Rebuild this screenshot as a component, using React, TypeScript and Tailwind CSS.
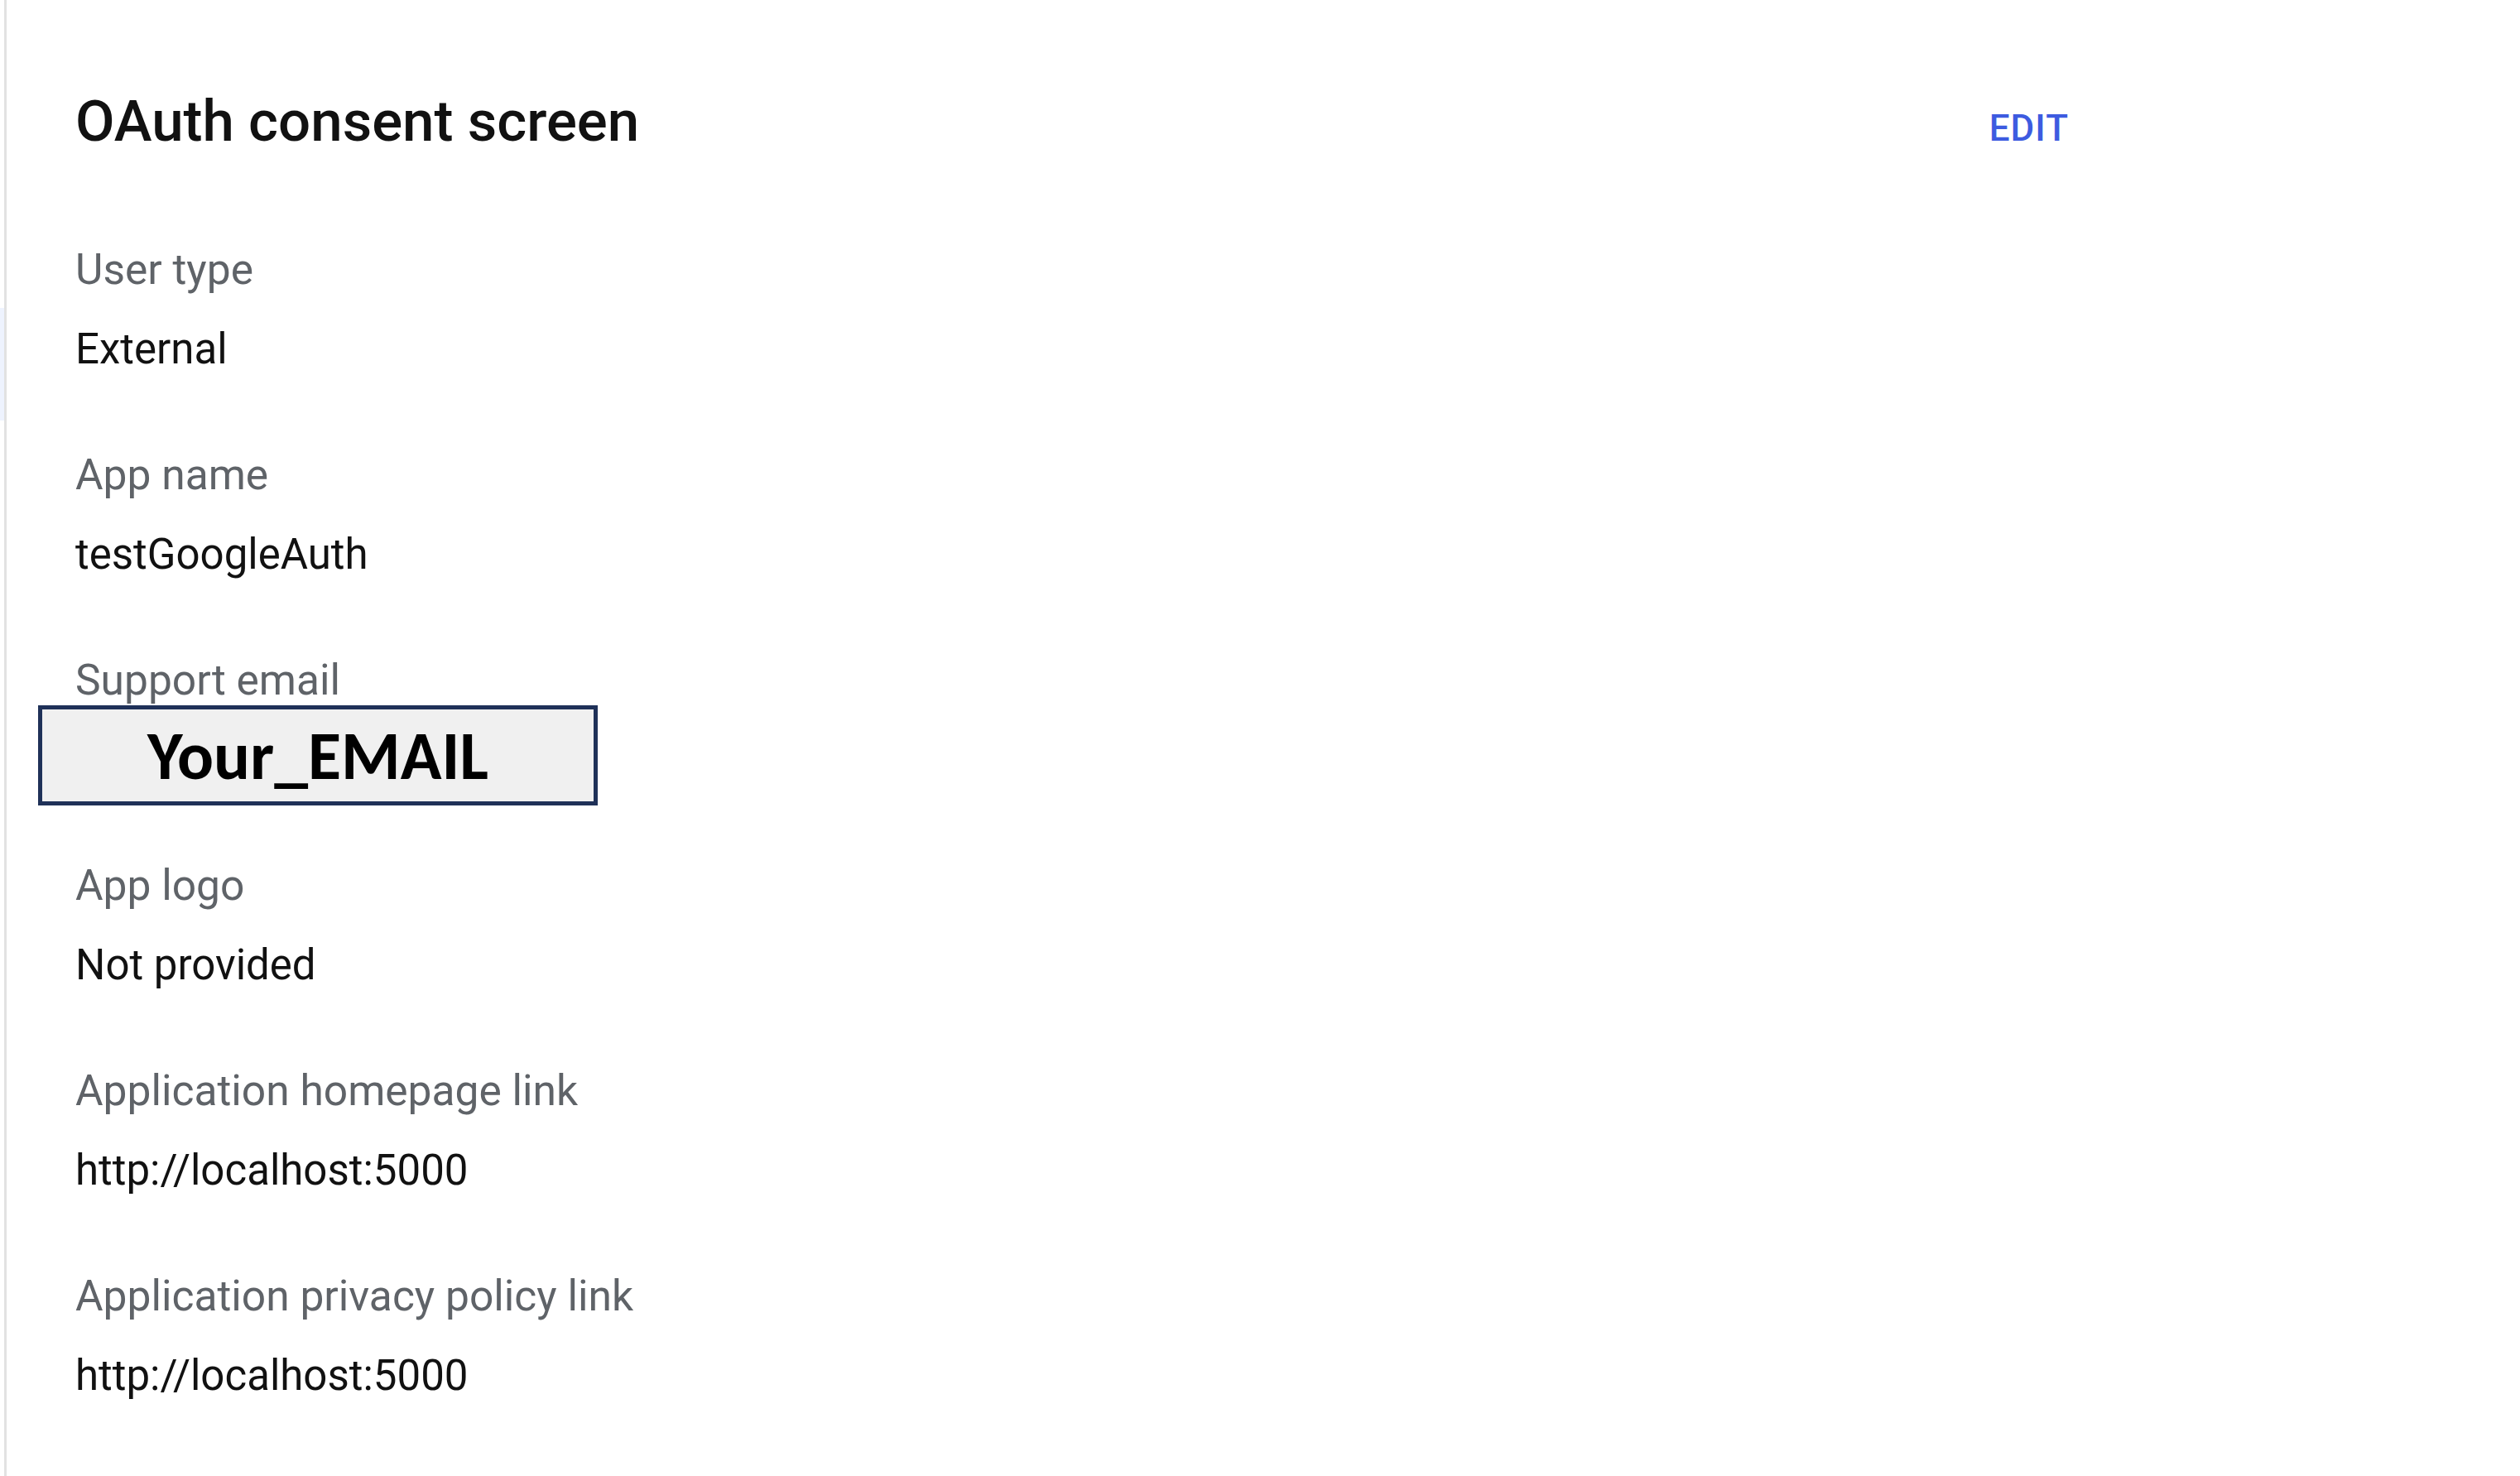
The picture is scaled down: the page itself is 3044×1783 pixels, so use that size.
import React from "react";

const sections: { label: string; value: string; email?: boolean }[] = [
  { label: "User type", value: "External" },
  { label: "App name", value: "testGoogleAuth" },
  { label: "Support email", value: "", email: true },
  { label: "App logo", value: "Not provided" },
  { label: "Application homepage link", value: "http://localhost:5000" },
  { label: "Application privacy policy link", value: "http://localhost:5000" },
];

export default function App() {
  return (
    <div className="flex w-[3044px] h-[1783px] bg-white overflow-hidden" style={{ fontFamily: "Roboto, 'Liberation Sans', Arial, sans-serif" }}>
      <div className="w-[5px] flex flex-col">
        <div className="mt-[372px] h-[136px] bg-[#eef3fe]" />
      </div>
      <div className="w-[3px] bg-[#e2e2e2]" />
      <main className="pl-[83px] pt-[103px] flex flex-col">
        <div className="flex w-[2408px] justify-between items-baseline">
          <h1 className="text-[69px] leading-[88px] font-medium text-[#111111]">OAuth consent screen</h1>
          <button className="text-[44px] font-medium tracking-[1px] text-[#3d5be0] leading-none">EDIT</button>
        </div>
        <div className="mt-[99px] flex flex-col gap-[80px]">
          {sections.map((s) => (
            <div key={s.label} className="flex flex-col">
              <div className="text-[51.5px] leading-[72px] text-[#5f6368]">{s.label}</div>
              {s.email ? (
                <div className="relative mt-[24px] h-[72px]">
                  <div className="absolute left-[-45px] top-[-30px] w-[676px] h-[121px] border-[5px] border-[#1f3158] bg-[#f0f0f0] flex items-center justify-center">
                    <span
                      className="text-[82px] font-bold text-black leading-none"
                      style={{ fontFamily: "Carlito, 'Open Sans', sans-serif" }}
                    >
                      Your_EMAIL
                    </span>
                  </div>
                </div>
              ) : (
                <div className="mt-[24px] text-[51px] leading-[72px] text-[#111111]">{s.value}</div>
              )}
            </div>
          ))}
        </div>
      </main>
    </div>
  );
}
